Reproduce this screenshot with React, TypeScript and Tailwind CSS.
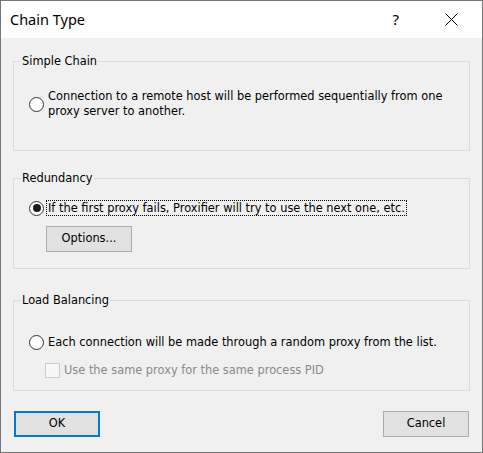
import React from "react"

const font = "font-['DejaVu_Sans',sans-serif] text-[11.4px]"

const Radio = ({ checked }: { checked?: boolean }) => (
  <span className="flex h-[15px] w-[15px] shrink-0 items-center justify-center rounded-full border border-[#333] bg-white">
    {checked && <span className="h-[8px] w-[8px] rounded-full bg-[#1a1a1a]" />}
  </span>
)

const Group = ({
  title,
  className,
  children,
}: {
  title: string
  className?: string
  children: React.ReactNode
}) => (
  <div className={`relative border border-[#dcdcdc] ${className ?? ""}`}>
    <span className="absolute left-[7px] top-[-8px] bg-[#f0f0f0] px-[1px] leading-[14px] text-black">
      {title}
    </span>
    {children}
  </div>
)

const App = () => {
  return (
    <div className={`flex h-[453px] w-[483px] flex-col border border-[#777] bg-[#f0f0f0] ${font}`}>
      {/* Title bar */}
      <div className="flex h-[37px] shrink-0 items-center bg-white">
        <span className="ml-[9px] font-['Noto_Sans',sans-serif] text-[14.5px] text-black">
          Chain Type
        </span>
        <span className="ml-auto mr-[46px] font-['Noto_Sans',sans-serif] text-[15px] text-black">
          ?
        </span>
        <svg className="mr-[24px]" width="13" height="13" viewBox="0 0 13 13">
          <path d="M0.5 0.5L12.5 12.5M12.5 0.5L0.5 12.5" stroke="#000" strokeWidth="1" />
        </svg>
      </div>

      {/* Body */}
      <div className="flex flex-1 flex-col px-3 pt-[23px]">
        <Group title="Simple Chain" className="h-[90px]">
          <div className="flex items-center pl-[15px] pt-[27px]">
            <Radio />
            <span className="ml-[4px] leading-[15px] text-black">
              Connection to a remote host will be performed sequentially from one
              <br />
              proxy server to another.
            </span>
          </div>
        </Group>

        <Group title="Redundancy" className="mt-[27px] h-[91px]">
          <div className="flex h-[16px] items-center pl-[15px] mt-[21px]">
            <Radio checked />
            <span className="ml-[2px] border border-dotted border-black px-[1px] leading-[14px] text-black">
              If the first proxy fails, Proxifier will try to use the next one, etc.
            </span>
          </div>
          <button className="ml-[32px] mt-[10px] h-[26px] w-[86px] border border-[#adadad] bg-[#e1e1e1] text-black">
            Options...
          </button>
        </Group>

        <Group title="Load Balancing" className="mt-[31px] h-[91px]">
          <div className="flex h-[16px] items-center pl-[15px] mt-[33px]">
            <Radio />
            <span className="ml-[4px] leading-[14px] text-black">
              Each connection will be made through a random proxy from the list.
            </span>
          </div>
          <div className="mt-[12px] flex h-[16px] items-center pl-[31px]">
            <span className="h-[15px] w-[15px] shrink-0 border border-[#cccccc] bg-[#f7f7f7]" />
            <span className="ml-[4px] leading-[14px] text-[#8a8a8a]">
              Use the same proxy for the same process PID
            </span>
          </div>
        </Group>

        <div className="mt-[20px] flex justify-between px-[1px]">
          <button className="h-[26px] w-[86px] border-2 border-[#0078d7] bg-[#e1e1e1] text-black">
            OK
          </button>
          <button className="h-[26px] w-[86px] border border-[#adadad] bg-[#e1e1e1] text-black">
            Cancel
          </button>
        </div>
      </div>
    </div>
  )
}

export default App
